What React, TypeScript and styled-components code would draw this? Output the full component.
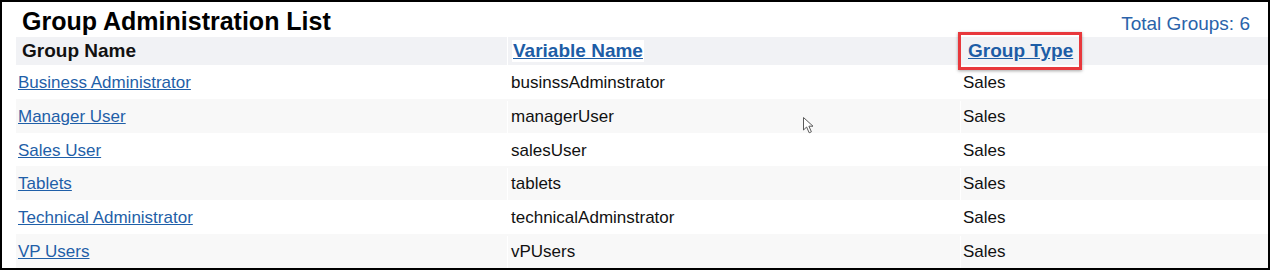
import React from "react";
import styled, { createGlobalStyle } from "styled-components";

const GlobalStyle = createGlobalStyle`
  html, body { margin: 0; padding: 0; background: #ffffff; }
  body { font-family: "Liberation Sans", Arial, sans-serif; }
`;

const Frame = styled.div`
  position: relative;
  width: 1270px;
  height: 270px;
  box-sizing: border-box;
  border: 2px solid #000;
  background: #fff;
  display: flex;
  flex-direction: column;
`;

const TopBar = styled.div`
  height: 35px;
  box-sizing: border-box;
  padding: 4px 18px 0 20px;
  display: flex;
  justify-content: space-between;
  align-items: baseline;
`;

const Title = styled.h1`
  margin: 0;
  font-size: 25px;
  line-height: 30px;
  font-weight: bold;
  color: #000;
`;

const Total = styled.div`
  font-size: 19px;
  line-height: 30px;
  color: #2a63aa;
`;

const Table = styled.div`
  flex: 1;
  margin-left: 14px;
  display: flex;
  flex-direction: column;
`;

const Row = styled.div<{ $bg: string; $header?: boolean }>`
  display: grid;
  grid-template-columns: 491px 453px 1fr;
  background: ${(p) => p.$bg};
  ${(p) => (p.$header ? "height: 28px;" : "flex: 1; padding-top: 2px;")}
`;

const Cell = styled.div<{ $pad: number; $first?: boolean }>`
  display: flex;
  align-items: center;
  padding-left: ${(p) => p.$pad}px;
  border-left: ${(p) => (p.$first ? "none" : "1px solid #ffffff")};
  font-size: 17px;
  color: #111;
  white-space: nowrap;
  overflow: visible;
`;

const HeaderLabel = styled.span`
  font-size: 19px;
  font-weight: bold;
  color: #111;
`;

const SortLink = styled.a<{ $boxed?: boolean }>`
  position: relative;
  display: inline-block;
  font-size: 19px;
  line-height: 22px;
  font-weight: bold;
  color: #1d5da6;
  text-decoration: underline;
  padding: 0 1px;
  background: ${(p) => (p.$boxed ? "transparent" : "#ffffff")};
  cursor: pointer;
`;

const Highlight = styled.span`
  position: absolute;
  top: -8px;
  bottom: -8px;
  left: -9px;
  right: -8px;
  border: 3px solid #e8383c;
  box-shadow: 0 1px 3px rgba(0, 0, 0, 0.35);
  pointer-events: none;
`;

const NameLink = styled.a`
  font-size: 17px;
  color: #1f5fa8;
  text-decoration: underline;
  cursor: pointer;
`;

const Cursor = styled.svg`
  position: absolute;
  left: 801px;
  top: 115px;
`;

const groups = [
  { name: "Business Administrator", variable: "businssAdminstrator", type: "Sales" },
  { name: "Manager User", variable: "managerUser", type: "Sales" },
  { name: "Sales User", variable: "salesUser", type: "Sales" },
  { name: "Tablets", variable: "tablets", type: "Sales" },
  { name: "Technical Administrator", variable: "technicalAdminstrator", type: "Sales" },
  { name: "VP Users", variable: "vPUsers", type: "Sales" },
];

export default function App() {
  return (
    <>
      <GlobalStyle />
      <Frame>
        <TopBar>
          <Title>Group Administration List</Title>
          <Total>Total Groups: {groups.length}</Total>
        </TopBar>
        <Table>
          <Row $bg="#f1f2f5" $header>
            <Cell $pad={6} $first>
              <HeaderLabel>Group Name</HeaderLabel>
            </Cell>
            <Cell $pad={4}>
              <SortLink>Variable Name</SortLink>
            </Cell>
            <Cell $pad={6}>
              <SortLink $boxed>
                Group Type
                <Highlight />
              </SortLink>
            </Cell>
          </Row>
          {groups.map((g, i) => (
            <Row key={g.variable} $bg={i % 2 === 1 ? "#f8f8f8" : "#ffffff"}>
              <Cell $pad={2} $first>
                <NameLink>{g.name}</NameLink>
              </Cell>
              <Cell $pad={3}>{g.variable}</Cell>
              <Cell $pad={2}>{g.type}</Cell>
            </Row>
          ))}
        </Table>
        <Cursor width="12" height="17" viewBox="0 0 12 17">
          <path
            d="M0.5 0.5 L0.5 13 L3.6 10 L6.2 15.8 L8.4 14.8 L5.9 9.2 L10 9.2 Z"
            fill="#ffffff"
            stroke="#5a5a5a"
            strokeWidth="1"
            strokeLinejoin="round"
          />
        </Cursor>
      </Frame>
    </>
  );
}
